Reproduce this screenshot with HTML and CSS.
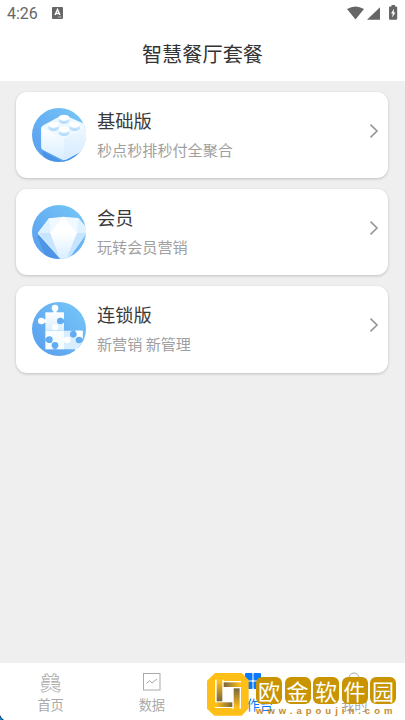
FILE: index.html
```html
<!DOCTYPE html>
<html lang="zh-CN">
<head>
<meta charset="utf-8">
<title>智慧餐厅套餐</title>
<link rel="stylesheet" href="styles.css">
</head>
<body>
<header>
  <div class="status">
    <span class="time">4:26</span>
    <svg class="ime" width="11" height="12" viewBox="0 0 11 12"><rect width="11" height="12" rx="1" fill="#666"/><path d="M3 8L5.500 2.500L8 8M4 6.500H7" fill="none" stroke="#fff" stroke-width="1.400"/><path d="M6 10H9.500" stroke="#ddd" stroke-width=".7"/></svg>
    <svg class="signals" width="52" height="16" viewBox="0 0 52 16" fill="#666"><path d="M0 4Q8.500-1 17 4L8.500 14.500Z"/><path d="M33 2.200V14.700H20Z"/><path d="M44.500 0H48V1.500H49.500Q50.200 1.500 50.200 2.500V13.700Q50.200 14.700 49.200 14.700H43Q42 14.700 42 13.700V2.500Q42 1.500 43 1.500H44.500Z"/><path d="M47 3.800L44 8.600H45.700L45.200 12.500L48.500 7.400H46.700Z" fill="#fff"/></svg>
  </div>
  <h1>智慧餐厅套餐</h1>
</header>
<main>
  <section class="card">
    <svg class="pic" viewBox="0 0 162 162">
      <defs>
        <linearGradient id="sky" x1="1" y1="0" x2="0" y2="1"><stop offset="0" stop-color="#77c8f8"/><stop offset="1" stop-color="#579cee"/></linearGradient>
        <linearGradient id="ice" x1="0" y1="0" x2="0" y2="1"><stop offset="0" stop-color="#fff"/><stop offset="1" stop-color="#d8eeff"/></linearGradient>
        <linearGradient id="stud" x1="0" y1="0" x2="0" y2="1"><stop offset="0" stop-color="#e0f1ff"/><stop offset="1" stop-color="#a8d6fb"/></linearGradient>
        <clipPath id="disc"><circle cx="81" cy="81" r="81"/></clipPath>
      </defs>
      <g clip-path="url(#disc)">
        <rect width="162" height="162" fill="url(#sky)"/>
        <path d="M30 128L90 160L160 120V162H40Z" fill="#3c86df" opacity=".6"/>
        <path d="M28 60Q28 55 34 52L84 25Q94 18 104 24L158 48Q164 51 164 60V116Q163 122 157 126L106 153Q97 158 88 153L34 126Q28 123 28 116Z" fill="#eef8ff"/>
        <path d="M28 58L96 92V156Q92 156 88 153L34 126Q28 123 28 116Z" fill="url(#ice)"/>
        <path d="M96 92L164 58V118L104 154L96 156Z" fill="url(#ice)"/>
        <path d="M96 92L164 58V118L104 154L96 156Z" fill="#cfe9ff" opacity=".35"/>
        <g fill="url(#stud)">
          <path d="M80 29V38A16 9 0 0 0 112 38V29Z"/><path d="M49 50V60A16 9 0 0 0 81 60V50Z"/><path d="M112 50V60A16 9 0 0 0 144 60V50Z"/><path d="M80 65V75A16 9 0 0 0 112 75V65Z"/>
        </g>
        <g fill="#fff"><ellipse cx="96" cy="29" rx="16" ry="9"/><ellipse cx="65" cy="50" rx="16" ry="9"/><ellipse cx="128" cy="50" rx="16" ry="9"/><ellipse cx="96" cy="65" rx="16" ry="9"/></g>
      </g>
    </svg>
    <div class="text"><h2>基础版</h2><p>秒点秒排秒付全聚合</p></div>
    <svg class="arrow" width="10" height="14" viewBox="0 0 10 14"><path d="M1.500.7L8 7L1.500 13.300"/></svg>
  </section>
  <section class="card">
    <svg class="pic" viewBox="0 0 162 162">
      <g clip-path="url(#disc)"><rect width="162" height="162" fill="url(#sky)"/><path d="M20 88L84 162H45L16 96Z" fill="#3f86df" opacity=".55"/></g>
      <path d="M51 40L94 35L139 39L162 67V87L115 154Q98 165 82 158L19 88Q17 84 20 80Z" fill="#f0f9ff"/>
      <path d="M51 40L19 84H55Z" fill="#dff1ff"/><path d="M55 84L94 35L135 84Z" fill="#fff"/><path d="M139 39L135 84H162V67Z" fill="#e1f2ff"/>
      <path d="M19 84H55L84 159Z" fill="#c8e5ff"/><path d="M55 84H135L103 161H84Z" fill="url(#ice)"/><path d="M135 84H162V88L115 154L103 161Z" fill="#c6e4ff"/>
    </svg>
    <div class="text"><h2>会员</h2><p>玩转会员营销</p></div>
    <svg class="arrow" width="10" height="14" viewBox="0 0 10 14"><path d="M1.500.7L8 7L1.500 13.300"/></svg>
  </section>
  <section class="card">
    <svg class="pic" viewBox="0 0 162 162">
      <circle cx="81" cy="81" r="81" fill="url(#sky)"/>
      <rect x="40" y="31" width="56" height="55" fill="url(#ice)"/>
      <rect x="40" y="86" width="56" height="56" fill="#f7fcff"/>
      <path d="M96 86H152V120L135 142H96Z" fill="#d8eeff"/>
      <path d="M130 86H152V110H130Z" fill="#fff"/>
      <g fill="#fff"><circle cx="69" cy="18" r="10"/><path d="M64 24H74V33H64Z"/><circle cx="28" cy="57" r="10"/><path d="M34 52H42V62H34Z"/><circle cx="69" cy="76" r="9"/><circle cx="106" cy="114" r="10"/><path d="M94 109H101V119H94Z"/><circle cx="135" cy="145" r="6"/></g>
      <g fill="#62acf2"><circle cx="85" cy="57" r="10"/><path d="M88 52H96V62H88Z"/><circle cx="52" cy="113" r="10"/><path d="M40 108H48V118H40Z"/><circle cx="69" cy="130" r="10"/><path d="M64 134H74V142H64Z"/><circle cx="124" cy="97" r="10"/><path d="M119 86H129V94H119Z"/><circle cx="141" cy="114" r="10"/><path d="M144 109H152V119H144Z"/></g>
    </svg>
    <div class="text"><h2>连锁版</h2><p>新营销 新管理</p></div>
    <svg class="arrow" width="10" height="14" viewBox="0 0 10 14"><path d="M1.500.7L8 7L1.500 13.300"/></svg>
  </section>
</main>
<nav>
  <div class="tab"><span class="mei">美</span><span>首页</span></div>
  <div class="tab"><svg width="20" height="20" viewBox="0 0 20 20" fill="none" stroke="#aaa"><rect x="1.500" y="1.500" width="16.500" height="16.500"/><path d="M4.500 11.500L7.500 8.500L10 11L15 7"/></svg><span>数据</span></div>
  <div class="tab active"><svg width="20" height="20" viewBox="0 0 20 20" fill="#0878ff"><rect x="2" y="1" width="7.500" height="7.500" rx="1"/><rect x="10.500" y="1" width="7.500" height="7.500" rx="1"/><rect x="2" y="9.500" width="7.500" height="7.500" rx="1"/><rect x="10.500" y="9.500" width="7.500" height="7.500" rx="1"/></svg><span>工作台</span></div>
  <div class="tab"><svg width="20" height="20" viewBox="0 0 20 20" fill="none" stroke="#aaa"><circle cx="10" cy="6" r="5"/><path d="M2 18Q2 11 10 11T18 18Z"/></svg><span>我的</span></div>
</nav>
<div class="mark">
  <svg class="logo" width="42" height="43" viewBox="0 0 126 129">
    <defs>
      <linearGradient id="fadeRight"><stop offset=".1" stop-color="#ffbf16"/><stop offset="1" stop-color="#77653c"/></linearGradient>
      <linearGradient id="fadeLeft"><stop offset="0" stop-color="#77653c"/><stop offset=".9" stop-color="#ffbf16"/></linearGradient>
      <linearGradient id="fadeDown" x2="0" y2="1"><stop offset=".1" stop-color="#ffbf16"/><stop offset="1" stop-color="#77653c"/></linearGradient>
      <linearGradient id="fadeUp" x2="0" y2="1"><stop offset="0" stop-color="#77653c"/><stop offset=".9" stop-color="#ffbf16"/></linearGradient>
    </defs>
    <path d="M24 0H104L125 21V106L104 128H22L0 107V23Z" fill="#ffbf16"/>
    <path d="M24 20H50V24H102V107H74V105H24Z" fill="#fff"/>
    <path d="M29 18H46V85H29Z" fill="url(#fadeDown)"/>
    <path d="M50 28H104V42H50Z" fill="url(#fadeLeft)"/>
    <path d="M80 46H98V109H80Z" fill="url(#fadeUp)"/>
    <path d="M22 88H76V102H22Z" fill="url(#fadeRight)"/>
  </svg>
  <div class="brand"><div class="seals"><b>欧</b><b>金</b><b>软</b><b>件</b><b>园</b></div><span class="url">www.apoujin.com</span></div>
</div>
<svg class="corner" width="4" height="5" viewBox="0 0 4 5"><path d="M0 0Q1 3 4 5H0Z" fill="#07345a"/><path d="M0 2L2 5H0Z" fill="#0b91e8"/></svg>
</body>
</html>
```
FILE: styles.css
```css
* { box-sizing: border-box; }
body { margin: 0; width: 405px; height: 720px; overflow: hidden; display: flex; flex-direction: column; background: #efefef; font-family: "Noto Sans CJK SC", sans-serif; font-weight: 400; position: relative; }
header { height: 81px; background: #fff; }
.status { height: 27px; display: flex; align-items: center; padding: 0 7px; }
.time { font: 400 16px/27px Roboto, sans-serif; color: #666; width: 45px; }
.ime { margin-top: -1px; }
.signals { margin: -2px -1px 0 auto; }
h1, h2, p { margin: 0; font-weight: 400; white-space: nowrap; }
h1 { font-size: 20.2px; line-height: 54px; text-align: center; color: #333; }
main { flex: 1; padding: 11px 17px 0 16px; display: flex; flex-direction: column; gap: 11px; }
.card { height: 86.200px; background: #fff; border-radius: 11px; box-shadow: 0 1px 3px rgba(0,0,0,.2); display: flex; align-items: center; padding: 0 9.500px 0 16px; }
.pic { width: 54px; height: 54px; flex: none; }
.text { margin: -5px 0 0 11px; flex: 1; }
h2 { font-size: 18.300px; line-height: 28px; color: #3a3a3a; }
p { font-size: 15.100px; line-height: 22px; color: #a0a0a0; margin-top: 4px; }
.arrow { fill: none; stroke: #999; stroke-width: 1.700; margin-top: -8px; }
nav { height: 57px; background: #fff; display: grid; grid-template-columns: repeat(4, 1fr); }
.tab { display: flex; flex-direction: column; align-items: center; font-size: 13.200px; line-height: 20px; color: #aaa; padding-top: 9px; }
.tab svg, .mei { height: 20px; margin-bottom: 3px; }
.mei { font-size: 18.500px; color: #fff; -webkit-text-stroke: 1.800px #b0b0b0; paint-order: stroke fill; }
.active { color: #0878ff; }
.mark { position: absolute; left: 207px; top: 673px; display: flex; }
.brand { margin-left: 7px; padding-top: 4px; }
.seals { display: flex; gap: 2.500px; }
.seals b { width: 26px; height: 27px; border-radius: 6px; background: #c99400; color: #fff; font-size: 22px; line-height: 26px; font-weight: 400; text-align: center; }
.url { display: block; font: 700 9.500px/10px "Liberation Sans", sans-serif; letter-spacing: 4px; color: #c58b2e; margin-top: 2px; white-space: nowrap; }
.corner { position: absolute; left: 0; bottom: 0; }
```
